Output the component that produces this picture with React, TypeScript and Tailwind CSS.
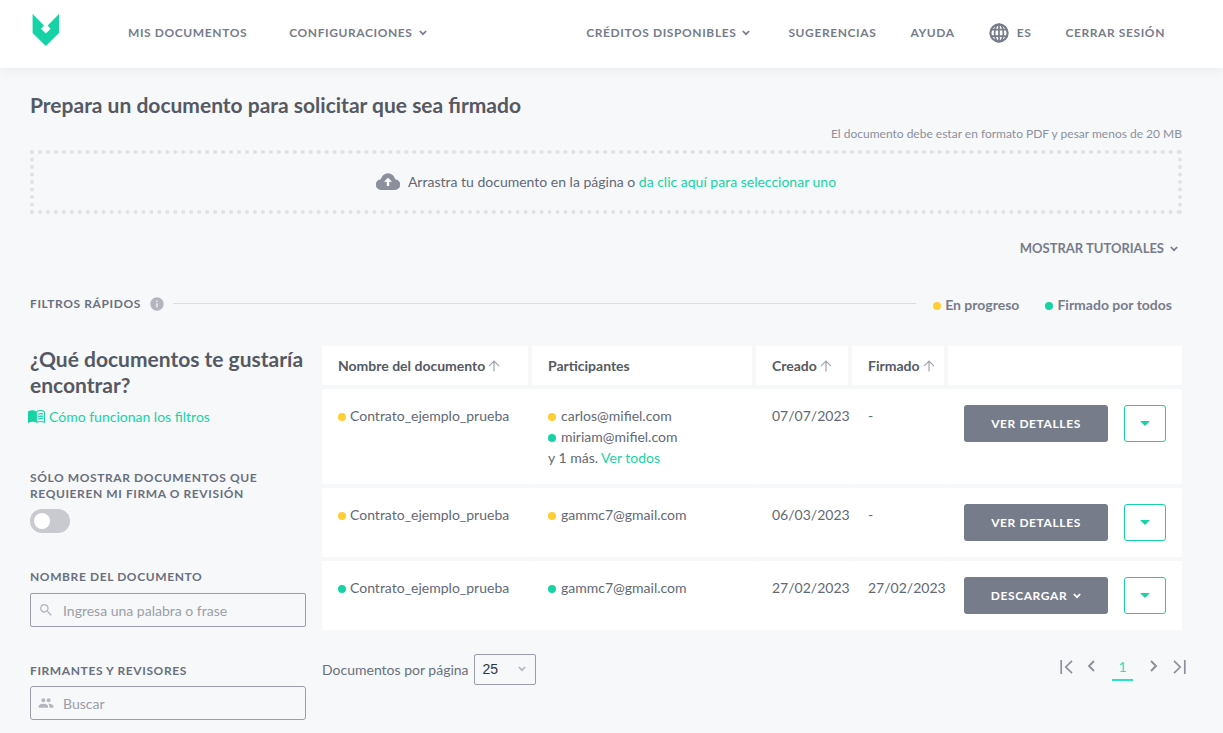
import React from 'react';
import { MdSearch, MdPeople, MdInfo } from 'react-icons/md';

type Status = 'progress' | 'signed';

interface Participant {
  email: string;
  status: Status;
}

interface DocumentRow {
  id: number;
  name: string;
  status: Status;
  participants: Participant[];
  more?: number;
  created: string;
  signed: string;
  action: string;
  hasMenu?: boolean;
}

const documents: DocumentRow[] = [
  {
    id: 1,
    name: 'Contrato_ejemplo_prueba',
    status: 'progress',
    participants: [
      { email: 'carlos@mifiel.com', status: 'progress' },
      { email: 'miriam@mifiel.com', status: 'signed' }
    ],
    more: 1,
    created: '07/07/2023',
    signed: '-',
    action: 'Ver detalles'
  },
  {
    id: 2,
    name: 'Contrato_ejemplo_prueba',
    status: 'progress',
    participants: [{ email: 'gammc7@gmail.com', status: 'progress' }],
    created: '06/03/2023',
    signed: '-',
    action: 'Ver detalles'
  },
  {
    id: 3,
    name: 'Contrato_ejemplo_prueba',
    status: 'signed',
    participants: [{ email: 'gammc7@gmail.com', status: 'signed' }],
    created: '27/02/2023',
    signed: '27/02/2023',
    action: 'Descargar',
    hasMenu: true
  }
];

const columns = [
  { label: 'Nombre del documento', sortable: true },
  { label: 'Participantes', sortable: false },
  { label: 'Creado', sortable: true },
  { label: 'Firmado', sortable: true }
];

const Dot = ({ status }: { status: Status }) => (
  <span className={`mt-[3px] inline-block size-2 shrink-0 rounded-full ${status === 'signed' ? 'bg-[#16d3a5]' : 'bg-[#ffcd34]'}`} />
);

const Chevron = ({ className = '' }: { className?: string }) => (
  <svg viewBox="0 0 8 6" fill="none" stroke="currentColor" strokeWidth="1.7" className={`h-[6px] w-2 shrink-0 ${className}`}>
    <path d="M0.8 1 L4 4.2 L7.2 1" />
  </svg>
);

const SortArrow = () => (
  <svg viewBox="0 0 12 12" fill="none" stroke="currentColor" strokeWidth="1.2" className="size-3 shrink-0 text-[#a2a5b0]">
    <path d="M6 11.5 V1.5 M1 6.2 L6 1.2 L11 6.2" />
  </svg>
);

const Logo = () => (
  <svg viewBox="0 0 28 32" className="h-8 w-7">
    <path fill="#16d3a5" d="M0.6 0 L12 11.4 L9 14.8 L13.8 19.6 L18.6 14.8 L15.6 11.4 L27 0 V19 L13.8 32 L0.6 19 Z" />
    <circle cx="13.8" cy="12.8" r="2.4" fill="#fff" />
  </svg>
);

const Globe = () => (
  <svg viewBox="0 0 20 20" fill="none" stroke="currentColor" className="size-5">
    <circle cx="10" cy="10" r="8.6" strokeWidth="2.2" />
    <g strokeWidth="1.7">
      <ellipse cx="10" cy="10" rx="4.4" ry="8.6" />
      <path d="M10 1 V19 M2 6.6 H18 M2 13.2 H18" />
    </g>
  </svg>
);

const CloudUpload = () => (
  <svg viewBox="0 0 24 18" className="h-[18px] w-6 shrink-0">
    <path fill="#8c909c" d="M5.4 18 A5.4 5.4 0 0 1 4.9 7.2 A7.2 7.2 0 0 1 19.1 7.2 A5.4 5.4 0 0 1 18.6 18 Z" />
    <path fill="#fff" d="M12 5.8 L16 9.8 H13.2 V14 H10.8 V9.8 H8 Z" />
  </svg>
);

const Book = () => (
  <svg viewBox="0 0 17 13" className="h-[13px] w-[17px] shrink-0">
    <path fill="#16d3a5" d="M0 1.6 C2.6 0 6 0 8.2 1.4 V12.4 C6 11.4 3 11.4 0 13 Z" />
    <g fill="none" stroke="#16d3a5" strokeWidth="1.1">
      <path d="M8.7 1.7 C11 0.3 14 0.3 16.4 1.7 V12.2 C14 11.3 11 11.3 8.7 12.2 Z" />
      <path d="M10.2 4.2 C11.8 3.5 13.4 3.5 15 3.9 M10.2 6.7 C11.8 6 13.4 6 15 6.4 M10.2 9.2 C11.8 8.5 13.4 8.5 15 8.9" />
    </g>
  </svg>
);

const Header = () => (
  <header className="relative flex h-[68px] items-center bg-white pr-[58px] pb-[2px] pl-8 text-[12px] font-bold tracking-wider text-[#777c8b] uppercase shadow-[0_2px_12px_rgba(0,0,0,0.06)]">
    <a href="#inicio" aria-label="Inicio" className="mb-[6px]">
      <Logo />
    </a>
    <nav className="ml-[68px] flex flex-1 items-center justify-between">
      <div className="flex items-center gap-[42px]">
        <a href="#documentos">Mis documentos</a>
        <button type="button" className="flex items-center gap-[6px] uppercase">
          Configuraciones <Chevron />
        </button>
      </div>
      <div className="flex items-center gap-[34px]">
        <button type="button" className="mr-1 flex items-center gap-[6px] uppercase">
          Créditos disponibles <Chevron />
        </button>
        <a href="#sugerencias">Sugerencias</a>
        <a href="#ayuda">Ayuda</a>
        <button type="button" className="flex items-center gap-2 uppercase">
          <Globe /> ES
        </button>
        <a href="#salir">Cerrar sesión</a>
      </div>
    </nav>
  </header>
);

const Filters = () => (
  <aside className="w-[276px] shrink-0">
    <h2 className="text-[21px] leading-[26px] font-bold text-[#555963]">¿Qué documentos te gustaría encontrar?</h2>
    <a href="#filtros" className="-ml-[2px] mt-2 flex items-center gap-1 text-[14px] leading-[21px] text-[#16d3a5]">
      <Book /> Cómo funcionan los filtros
    </a>

    <label htmlFor="solo-firma" className="mt-[43px] block text-[12px] leading-4 font-bold tracking-wider text-[#6a6f7d] uppercase">
      Sólo mostrar documentos que requieren mi firma o revisión
    </label>
    <input
      id="solo-firma"
      type="checkbox"
      role="switch"
      className="mt-[7px] block h-6 w-10 appearance-none rounded-full bg-[#c9cad0] p-1 before:block before:size-4 before:rounded-full before:bg-white checked:bg-[#16d3a5] checked:before:translate-x-4"
    />

    <label htmlFor="nombre" className="mt-9 block text-[12px] leading-4 font-bold tracking-wider text-[#6a6f7d] uppercase">
      Nombre del documento
    </label>
    <div className="mt-2 flex h-[34px] items-center gap-[9px] rounded-[2px] border border-[#9a9eab] px-[7px]">
      <MdSearch size={16} className="shrink-0 text-[#b4b6bf]" />
      <input id="nombre" type="text" placeholder="Ingresa una palabra o frase" className="min-w-0 flex-1 text-[14px] text-[#555963] outline-none placeholder:text-[#9a9ea8]" />
    </div>

    <label htmlFor="firmantes" className="mt-9 block text-[12px] leading-4 font-bold tracking-wider text-[#6a6f7d] uppercase">
      Firmantes y revisores
    </label>
    <div className="mt-[7px] flex h-[34px] items-center gap-[9px] rounded-[3px] border border-[#9a9eab] px-[7px]">
      <MdPeople size={16} className="shrink-0 text-[#b4b6bf]" />
      <input id="firmantes" type="text" placeholder="Buscar" className="min-w-0 flex-1 text-[14px] text-[#555963] outline-none placeholder:text-[#9a9ea8]" />
    </div>
  </aside>
);

const DocumentsTable = () => (
  <table className="-mt-1 w-full table-fixed border-separate border-spacing-x-0 border-spacing-y-1 text-left text-[14px] leading-[21px]">
    <colgroup>
      <col />
      <col className="w-[224px]" />
      <col className="w-[96px]" />
      <col className="w-[96px]" />
      <col className="w-[234px]" />
    </colgroup>
    <thead>
      <tr className="h-[39px] text-[#555963]">
        {columns.map((column) => (
          <th key={column.label} className="border-r-4 border-[#f7f8fa] bg-white pl-4 font-bold whitespace-nowrap">
            <span className="flex items-center gap-[3px]">
              {column.label}
              {column.sortable && <SortArrow />}
            </span>
          </th>
        ))}
        <td className="bg-white" />
      </tr>
    </thead>
    <tbody>
      {documents.map((doc) => (
        <tr key={doc.id} className="text-[#636875]">
          <td className="rounded-[2px] bg-white py-4 pl-4 align-top">
            <span className="flex items-center gap-1">
              <Dot status={doc.status} /> {doc.name}
            </span>
          </td>
          <td className="rounded-[2px] bg-white py-4 pl-4 align-top">
            {doc.participants.map((participant) => (
              <span key={participant.email} className="flex items-center gap-[5px]">
                <Dot status={participant.status} /> {participant.email}
              </span>
            ))}
            {doc.more && (
              <span className="block">
                y {doc.more} más. <a href="#participantes" className="text-[#16d3a5]">Ver todos</a>
              </span>
            )}
          </td>
          <td className="rounded-[2px] bg-white py-4 pl-4 align-top">{doc.created}</td>
          <td className="rounded-[2px] bg-white py-4 pl-4 align-top">{doc.signed}</td>
          <td className="rounded-[2px] bg-white p-4 align-top">
            <div className="flex gap-4">
              <button type="button" className="flex h-[37px] flex-1 items-center justify-center gap-[6px] rounded-[3px] bg-[#777c8a] text-[12px] font-bold tracking-wider text-white uppercase">
                {doc.action}
                {doc.hasMenu && <Chevron />}
              </button>
              <button type="button" aria-label="Más opciones" className="flex h-[37px] w-[42px] items-center justify-center rounded-[3px] border border-[#16d3a5]">
                <svg viewBox="0 0 10 5" className="h-[5px] w-[10px]">
                  <path fill="#16d3a5" d="M0 0 H10 L5 5 Z" />
                </svg>
              </button>
            </div>
          </td>
        </tr>
      ))}
    </tbody>
  </table>
);

const Pagination = () => (
  <div className="mt-5 flex items-start justify-between">
    <div className="flex items-center gap-[5px] text-[14px] text-[#6a6f7d]">
      <label htmlFor="por-pagina">Documentos por página</label>
      <div className="relative">
        <select id="por-pagina" defaultValue="25" className="block h-[31px] w-[62px] appearance-none rounded-[2px] border border-[#9a9eab] pl-2 font-['Liberation_Sans',sans-serif] text-[14px] text-[#2d3640]">
          <option>25</option>
          <option>50</option>
        </select>
        <Chevron className="pointer-events-none absolute top-3 right-[10px] text-[#b4b6bf]" />
      </div>
    </div>
    <nav aria-label="Paginación" className="-mr-1 flex items-start text-[#8c909c]">
      <button type="button" aria-label="Primera página" className="pt-[6px]">
        <svg viewBox="0 0 13 14" fill="none" stroke="currentColor" strokeWidth="1.7" className="h-[14px] w-[13px]">
          <path d="M1.2 0 V14 M12 0.8 L5.8 7 L12 13.2" />
        </svg>
      </button>
      <button type="button" aria-label="Página anterior" className="ml-[14px] pt-[6px]">
        <svg viewBox="0 0 8 12" fill="none" stroke="currentColor" strokeWidth="1.9" className="h-3 w-2">
          <path d="M7 1 L2 6 L7 11" />
        </svg>
      </button>
      <button type="button" aria-current="page" className="ml-[17px] h-[27px] w-[21px] border-b-2 border-[#2be3c0] text-[14px] text-[#2be3c0]">
        1
      </button>
      <button type="button" aria-label="Página siguiente" className="ml-[17px] pt-[6px]">
        <svg viewBox="0 0 8 12" fill="none" stroke="currentColor" strokeWidth="1.9" className="h-3 w-2">
          <path d="M1 1 L6 6 L1 11" />
        </svg>
      </button>
      <button type="button" aria-label="Última página" className="ml-[15px] pt-[6px]">
        <svg viewBox="0 0 13 14" fill="none" stroke="currentColor" strokeWidth="1.7" className="h-[14px] w-[13px]">
          <path d="M11.8 0 V14 M1 0.8 L7.2 7 L1 13.2" />
        </svg>
      </button>
    </nav>
  </div>
);

export default function App() {
  return (
    <div className="min-h-screen bg-[#f7f8fa] font-['Lato',sans-serif]">
      <Header />
      <main className="pt-6 pr-[41px] pb-3 pl-[30px]">
        <h1 className="text-[21px] leading-[26px] font-bold text-[#555963]">Prepara un documento para solicitar que sea firmado</h1>
        <p className="mt-2 text-right text-[12px] leading-4 text-[#8c909c]">El documento debe estar en formato PDF y pesar menos de 20 MB</p>

        {/* Drop zone */}
        <div className="mt-2 flex h-16 items-center justify-center gap-2 border-4 border-dotted border-[#e1e2e5] pb-[2px] text-[14px] text-[#636875]">
          <CloudUpload />
          <p>
            Arrastra tu documento en la página o{' '}
            <button type="button" className="text-[#16d3a5]">da clic aquí para seleccionar uno</button>
          </p>
        </div>

        <div className="mt-6 flex justify-end pr-1">
          <button type="button" className="flex items-center gap-[6px] text-[13px] leading-[21px] font-bold text-[#777c8b] uppercase">
            Mostrar tutoriales <Chevron />
          </button>
        </div>

        <div className="mt-[33px] flex items-center">
          <h3 className="text-[12px] leading-[21px] font-bold tracking-wider text-[#6a6f7d] uppercase">Filtros rápidos</h3>
          <MdInfo size={16} className="ml-2 text-[#b4b6bf]" />
          <div className="ml-2 h-px flex-1 bg-[#dcdee2]" />
          <div className="ml-[17px] flex gap-[26px] pt-[2px] pr-[10px] text-[14px] leading-[21px] font-bold text-[#777c8b]">
            <button type="button" className="flex items-center gap-1">
              <Dot status="progress" /> En progreso
            </button>
            <button type="button" className="flex items-center gap-1">
              <Dot status="signed" /> Firmado por todos
            </button>
          </div>
        </div>

        <div className="mt-[31px] flex items-start gap-4">
          <Filters />
          <section className="min-w-0 flex-1">
            <DocumentsTable />
            <Pagination />
          </section>
        </div>
      </main>
    </div>
  );
}
